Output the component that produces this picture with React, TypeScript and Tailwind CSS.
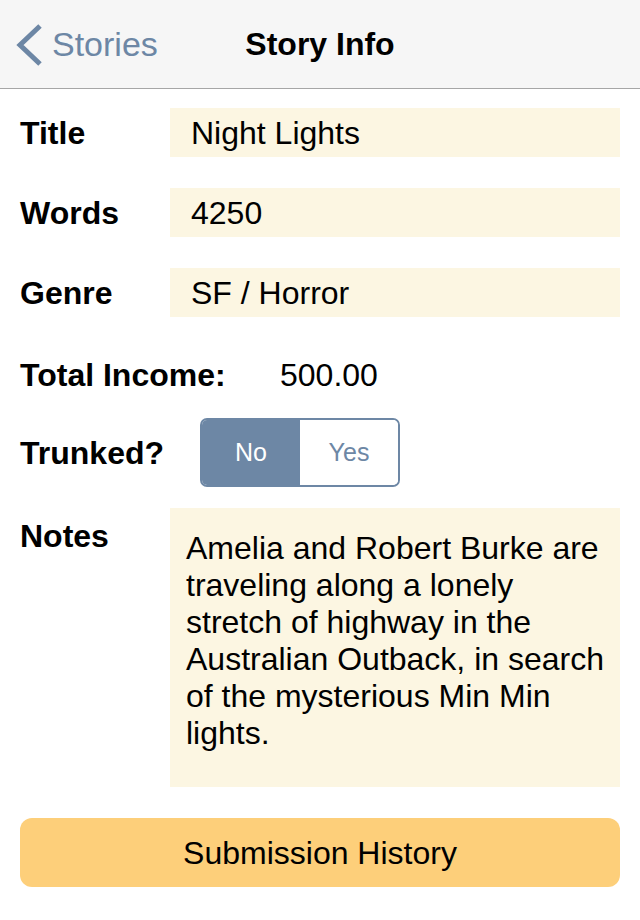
import React, { useState } from 'react';

const FIELDS = [
  { label: 'Title', value: 'Night Lights' },
  { label: 'Words', value: '4250' },
  { label: 'Genre', value: 'SF / Horror' },
];

const NOTES = [
  'Amelia and Robert Burke are',
  'traveling along a lonely',
  'stretch of highway in the',
  'Australian Outback, in search',
  'of the mysterious Min Min',
  'lights.',
];

const App: React.FC = () => {
  const [trunked, setTrunked] = useState(false);

  return (
    <div className="w-[640px] h-[920px] bg-white text-black font-['Liberation_Sans',Arial,sans-serif] overflow-hidden">
      <div className="relative h-[89px] bg-[#f6f6f6] border-b border-[#a6a6a6] flex items-center">
        <button className="flex items-center pl-[14px] text-[#6d87a5]">
          <svg width="32" height="44" viewBox="0 0 32 44" className="mt-[1px]">
            <path d="M26 3 L6 22 L26 41" fill="none" stroke="#6d87a5" strokeWidth="5" />
          </svg>
          <span className="text-[34px] ml-[6px] leading-none">Stories</span>
        </button>
        <div className="absolute inset-x-0 text-center text-[32px] font-bold leading-none pointer-events-none">
          Story Info
        </div>
      </div>

      <div className="px-5 pt-[19px]">
        {FIELDS.map((f, i) => (
          <div key={f.label} className={`flex items-center ${i > 0 ? 'mt-[31px]' : ''}`}>
            <div className="w-[150px] text-[32px] font-bold">{f.label}</div>
            <div className="flex-1 h-[49px] bg-[#fcf6e2] flex items-center pl-[21px] text-[32px]">{f.value}</div>
          </div>
        ))}

        <div className="flex items-center h-[49px] mt-[33px]">
          <div className="w-[260px] text-[32px] font-bold">Total Income:</div>
          <div className="text-[32px]">500.00</div>
        </div>

        <div className="flex items-center mt-[19px]">
          <div className="w-[180px] text-[32px] font-bold">Trunked?</div>
          <div className="flex w-[200px] h-[69px] border-2 border-[#6d87a5] rounded-[7px] overflow-hidden text-[25px]">
            <button
              onClick={() => setTrunked(false)}
              className={`flex-1 flex items-center justify-center ${!trunked ? 'bg-[#6d87a5] text-white' : 'bg-white text-[#6d87a5]'}`}
            >
              No
            </button>
            <button
              onClick={() => setTrunked(true)}
              className={`flex-1 flex items-center justify-center ${trunked ? 'bg-[#6d87a5] text-white' : 'bg-white text-[#6d87a5]'}`}
            >
              Yes
            </button>
          </div>
        </div>

        <div className="flex items-start mt-[21px]">
          <div className="w-[150px] text-[32px] font-bold pt-[4px]">Notes</div>
          <div className="flex-1 h-[279px] bg-[#fcf6e2] pl-4 pt-[22px] text-[32px] leading-[37px]">
            {NOTES.map(l => (
              <div key={l} className="whitespace-nowrap">{l}</div>
            ))}
          </div>
        </div>

        <button className="mt-[31px] w-full h-[69px] rounded-[12px] bg-[#fdcf7a] text-[32px]">
          Submission History
        </button>
      </div>
    </div>
  );
};

export default App;
